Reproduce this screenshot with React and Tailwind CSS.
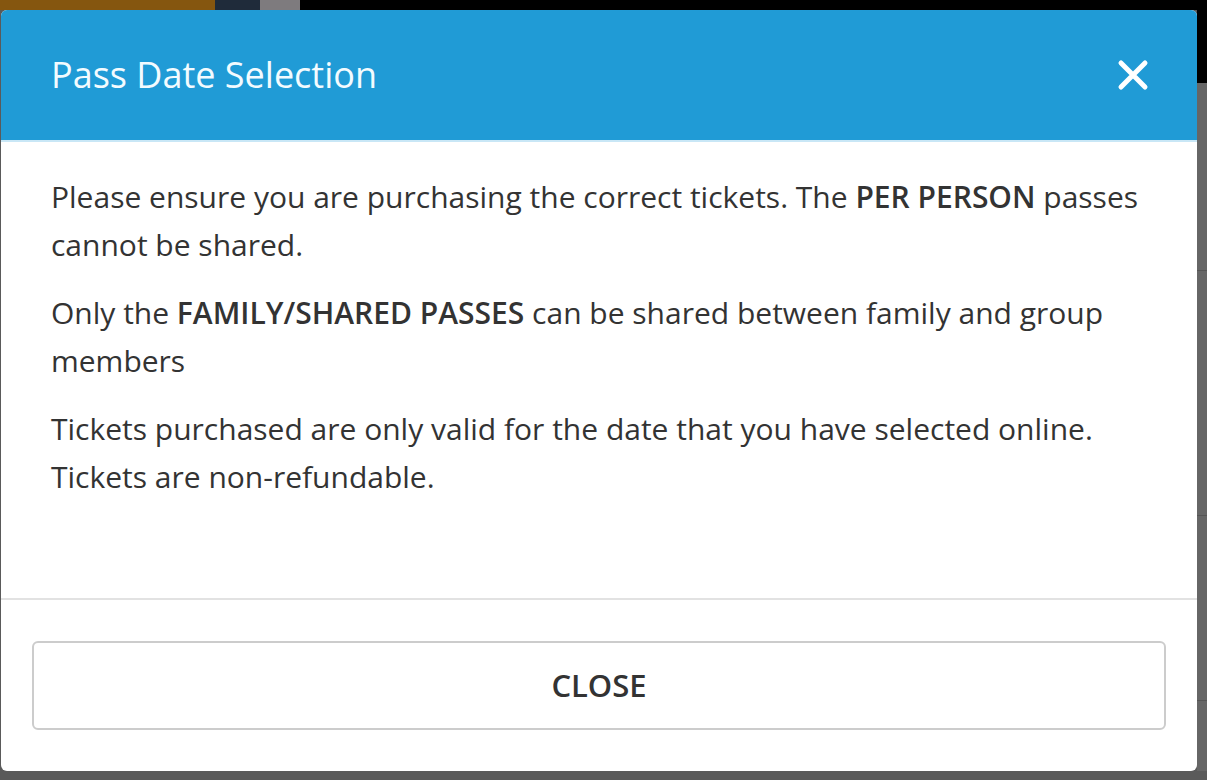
import React from "react";

const CloseIcon = () => (
    <svg width="32" height="32" viewBox="0 0 32 32" fill="none">
        <path d="M4 4L28 28M28 4L4 28" stroke="white" strokeWidth="5" strokeLinecap="round" />
    </svg>
);

const App = () => {
    return (
        <div className="relative w-[1207px] h-[780px] overflow-hidden bg-[#5a5a5a]" style={{ fontFamily: '"Open Sans", "Noto Sans", sans-serif' }}>
            {/* dimmed page behind the modal */}
            <div className="flex h-[10px]">
                <div className="w-[215px] bg-[#85560f]"></div>
                <div className="w-[45px] bg-[#1f2b3a]"></div>
                <div className="w-[40px] bg-[#7e7b7e]"></div>
                <div className="flex-1 bg-black"></div>
            </div>
            <div className="flex h-[761px]">
                <div className="flex-1"></div>
                <div className="w-[10px] flex flex-col">
                    <div className="h-[73px] bg-black"></div>
                    <div className="flex-1 bg-[#666666] border-b border-[#555]"></div>
                    <div className="h-[245px] bg-[#666666] border-b border-[#555]"></div>
                    <div className="h-[185px] bg-[#666666] border-b border-[#555]"></div>
                    <div className="h-[70px] bg-[#666666]"></div>
                </div>
            </div>

            {/* Modal */}
            <div className="absolute left-[1px] top-[10px] w-[1196px] h-[761px] bg-white rounded-[6px] overflow-hidden flex flex-col">
                <div className="h-[132px] bg-[#209bd6] border-b-2 border-[#c9e7f6] flex items-center justify-between pl-[50px] pr-[48px] shrink-0">
                    <h2 className="text-[36px] text-[#f3fbff] font-normal leading-none">Pass Date Selection</h2>
                    <CloseIcon />
                </div>

                <div className="flex-1 pt-[31px] px-[50px] text-[#333333] text-[30px] leading-[48px]">
                    <p className="mb-[20px]">Please ensure you are purchasing the correct tickets. The <b className="font-semibold">PER PERSON</b> passes cannot be shared.</p>
                    <p className="mb-[20px]">Only the <b className="font-semibold">FAMILY/SHARED PASSES</b> can be shared between family and group members</p>
                    <p>Tickets purchased are only valid for the date that you have selected online. Tickets are non-refundable.</p>
                </div>

                <div className="border-t-2 border-[#e2e2e2] pt-[41px] pb-[41px] px-[31px] shrink-0">
                    <button className="w-full h-[89px] border-2 border-[#cccccc] rounded-[6px] bg-white text-[#333333] text-[31px] font-semibold">
                        CLOSE
                    </button>
                </div>
            </div>
        </div>
    );
};

export default App;
